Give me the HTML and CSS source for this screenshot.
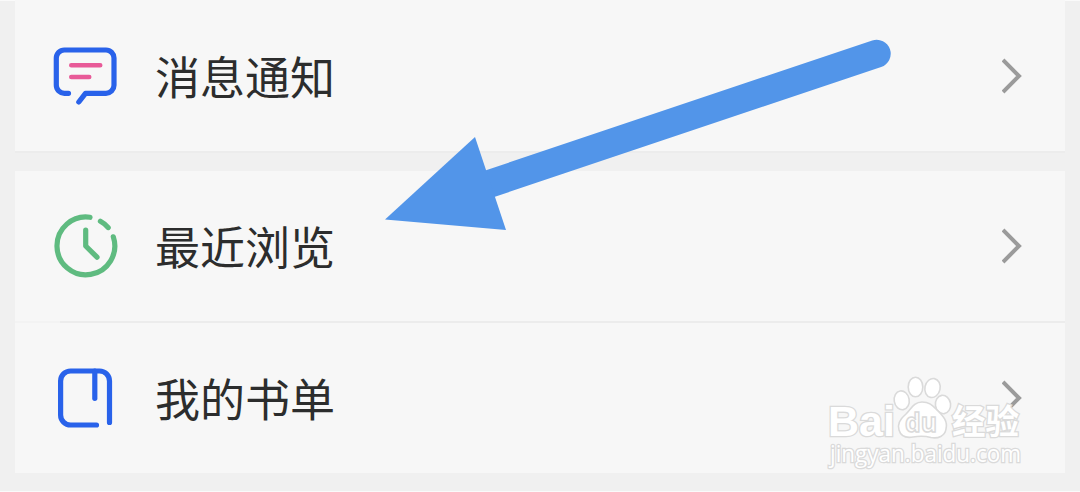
FILE: index.html
```
<!DOCTYPE html>
<html lang="zh-CN">
<head>
    <meta charset="UTF-8">
    <meta name="viewport" content="width=device-width, initial-scale=1.0">
    <title>我的</title>
    <link rel="stylesheet" href="styles.css">
</head>
<body>
    <div class="menu">
        <div class="group">
            <div class="item">
                <svg class="icon message" viewBox="50 41 70 70">
                    <path d="M68.5 93.3H64.3A8 8 0 0 1 56.3 85.3V58A8 8 0 0 1 64.3 50H106A8 8 0 0 1 114 58V85.3A8 8 0 0 1 106 93.3H85.5L78.8 102"/>
                    <path class="lines" d="M71.3 65.2H100.2M71.3 77H89.2"/>
                </svg>
                <span class="title">消息通知</span>
                <svg class="arrow" viewBox="0 0 20 36"><path d="M1 2L17 18L1 34"/></svg>
            </div>
        </div>
        <div class="group">
            <div class="item">
                <svg class="icon clock" viewBox="50 211 70 70">
                    <path d="M90 217.3A28.9 28.9 0 1 0 113.3 236.8"/>
                    <path d="M100.4 221.2Q105 223.6 108.2 227.6"/>
                    <path d="M85.7 230.2V246L97 257.2"/>
                </svg>
                <span class="title">最近浏览</span>
                <svg class="arrow" viewBox="0 0 20 36"><path d="M1 2L17 18L1 34"/></svg>
            </div>
            <div class="line"></div>
            <div class="item">
                <svg class="icon book" viewBox="50 363 70 70">
                    <path d="M96.5 425H70.6A10 10 0 0 1 60.6 415V381A10 10 0 0 1 70.6 371H99.5A10 10 0 0 1 109.5 381V422.5"/>
                    <path d="M94.8 371V398.3"/>
                </svg>
                <span class="title">我的书单</span>
                <svg class="arrow" viewBox="0 0 20 36"><path d="M1 2L17 18L1 34"/></svg>
            </div>
        </div>
    </div>

    <!-- pointer over the list -->
    <svg class="pointer" viewBox="380 30 520 210">
        <path class="shaft" d="M480 187L876.7 53.7"/>
        <path class="tip" d="M385 219.5L475 137L506 230Z"/>
    </svg>

    <svg class="watermark" viewBox="820 370 210 105">
        <g class="paw">
            <ellipse cx="901.7" cy="400.3" rx="7.5" ry="9.5" transform="rotate(-10 901.7 400.3)"/>
            <ellipse cx="915.5" cy="387" rx="7.3" ry="9.8"/>
            <ellipse cx="932.5" cy="388" rx="7.6" ry="9.6" transform="rotate(12 932.5 388)"/>
            <ellipse cx="943" cy="404.5" rx="7.6" ry="9.2" transform="rotate(-8 943 404.5)"/>
            <path d="M922 402C914 402 911 409 906 414C900 419 897 424 899 430C901 437 907 438 913 437C919 436 925 436 931 437.5C938 439 945 436 946 429C948 421 943 416 938 411C933 406 930 402 922 402Z"/>
        </g>
        <text class="mark" x="828" y="436" textLength="67" lengthAdjust="spacingAndGlyphs">Bai</text>
        <text class="du" x="905" y="432" textLength="32" lengthAdjust="spacingAndGlyphs">du</text>
        <text class="mark cn" x="952" y="433.5" textLength="67" lengthAdjust="spacingAndGlyphs">经验</text>
        <text class="site" x="830" y="462" textLength="191" lengthAdjust="spacingAndGlyphs">jingyan.baidu.com</text>
    </svg>
</body>
</html>
```
FILE: styles.css
```
body{
    margin: 0;
    height: 491px;
    overflow: hidden;
    position: relative;
    background-color: #f0f0f0;
    border-bottom: 1px solid #fafafa;
    font-family: "Noto Sans CJK SC", sans-serif;
}
.menu{
    display: flex;
    flex-direction: column;
    gap: 18px;
    padding: 0 15px;
    box-shadow: inset 0 1px #fafafa;
}
.group{
    background-color: #f7f7f7;
}
.group:first-child{
    border-bottom: 2px solid #ececec;
}
.item{
    display: flex;
    align-items: center;
    height: 150px;
    padding-left: 35px;
    padding-right: 43px;
}
.group:first-child .item{
    height: 151px;
}
.line{
    height: 2px;
    border-left: 45px solid #f3f3f3;
    background-color: #ececec;
}
.icon{
    width: 70px;
    height: 70px;
    fill: none;
    stroke-width: 5.2;
    stroke-linecap: round;
    stroke-linejoin: round;
}
.message, .book{
    stroke: #2962ea;
}
.message .lines{
    stroke: #e85a98;
    stroke-width: 4.6;
}
.clock{
    stroke: #5fbb80;
}
.title{
    flex: 1;
    margin-left: 35px;
    font-size: 45px;
    line-height: 60px;
    color: #2c2d2d;
}
.arrow{
    width: 20px;
    height: 36px;
    fill: none;
    stroke: #9b9b9b;
    stroke-width: 4;
}
.pointer{
    position: absolute;
    left: 380px;
    top: 30px;
    width: 520px;
    height: 210px;
}
.shaft{
    stroke: #5295e9;
    stroke-width: 28;
    stroke-linecap: round;
}
.tip{
    fill: #5295e9;
}
.watermark{
    position: absolute;
    left: 820px;
    top: 370px;
    width: 210px;
    height: 105px;
    fill: #fff;
    stroke: #dadada;
    stroke-width: 1.6;
}
.mark, .site{
    paint-order: stroke;
    stroke-width: 2.6;
}
.mark{
    font-family: "Liberation Sans", sans-serif;
    font-size: 43px;
    font-weight: bold;
}
.cn{
    font-family: "Noto Sans CJK SC", sans-serif;
    font-size: 34px;
}
.du{
    font-family: "Open Sans", sans-serif;
    font-size: 27px;
    font-weight: bold;
}
.site{
    font-family: "Open Sans", sans-serif;
    font-size: 23px;
}
```
